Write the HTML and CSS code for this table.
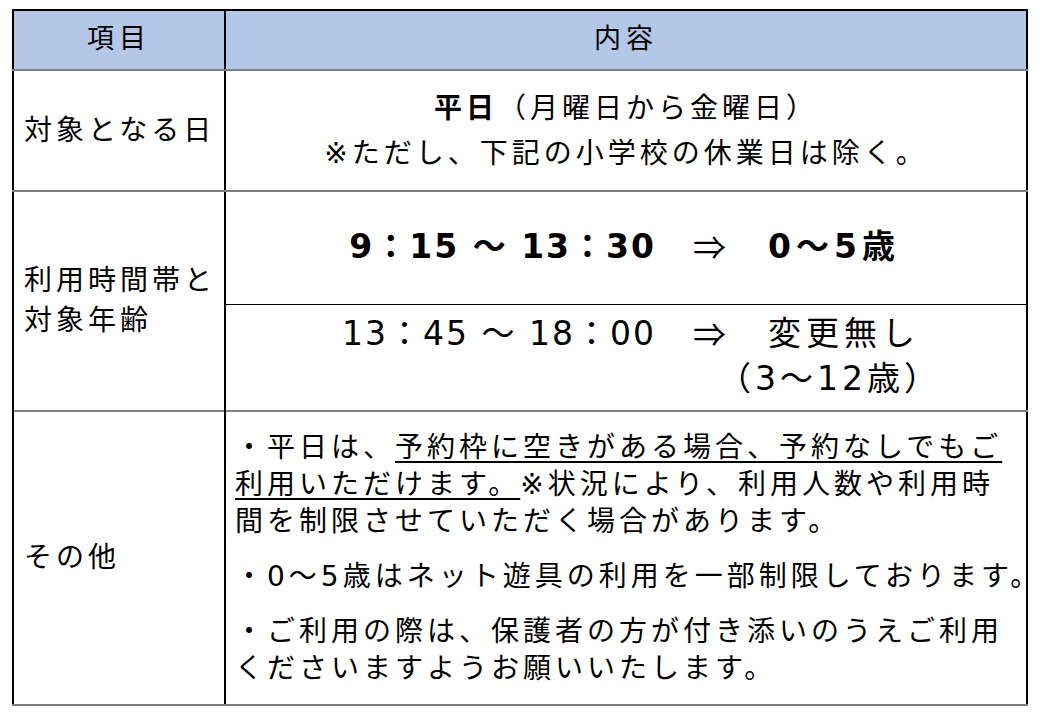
FILE: index.html
```html
<!DOCTYPE html>
<html lang="ja">
<head>
<meta charset="utf-8">
<title>利用案内</title>
<link rel="stylesheet" href="styles.css">
</head>
<body>
<table class="info">
  <colgroup><col class="c1"><col class="c2"></colgroup>
  <thead>
    <tr class="head"><th>項目</th><th>内容</th></tr>
  </thead>
  <tbody>
    <tr class="r-day">
      <td class="label">対象となる日</td>
      <td class="center">
        <div><b class="big">平日</b>（月曜日から金曜日）</div>
        <div>※ただし、下記の小学校の休業日は除く。</div>
      </td>
    </tr>
    <tr class="r-time1">
      <td class="label" rowspan="2">利用時間帯と<br>対象年齢</td>
      <td class="time-cell bold">
        <div class="time-grid"><span class="t">9：15 〜 13：30</span><span class="arrow">⇒</span><span class="age">0〜5歳</span></div>
      </td>
    </tr>
    <tr class="r-time2">
      <td class="time-cell">
        <div class="time-grid"><span class="t">13：45 〜 18：00</span><span class="arrow">⇒</span><span class="age">変更無し<span class="sub">（3〜12歳）</span></span></div>
      </td>
    </tr>
    <tr class="r-other">
      <td class="label">その他</td>
      <td class="notes">
        <p>・平日は、<u>予約枠に空きがある場合、予約なしでもご<br>利用いただけます。</u>※状況により、利用人数や利用時<br>間を制限させていただく場合があります。</p>
        <p class="nowrap">・0〜5歳はネット遊具の利用を一部制限しております。</p>
        <p>・ご利用の際は、保護者の方が付き添いのうえご利用<br>くださいますようお願いいたします。</p>
      </td>
    </tr>
  </tbody>
</table>
</body>
</html>
```

FILE: styles.css
```css
body {
  margin: 0;
  background: #ffffff;
  color: #000000;
  font-family: "DejaVu Sans", "Noto Sans CJK JP", sans-serif;
}

.info {
  margin: 9px 0 0 12px;
  width: 1016px;
  border-collapse: collapse;
  table-layout: fixed;
  font-size: 28px;
  letter-spacing: 4px;
}

.c1 { width: 212px; }

.info th,
.info td {
  border-left: 2px solid #000000;
  border-right: 2px solid #000000;
  border-top: 2px solid #7f7f7f;
  border-bottom: 2px solid #7f7f7f;
  padding: 0;
}

.head th {
  height: 55px;
  background: #b4c7e7;
  font-weight: normal;
  text-align: center;
  vertical-align: middle;
  border-top-color: #000000;
  font-size: 27px;
  letter-spacing: 5px;
  line-height: 30px;
  padding-bottom: 3px;
}

.label {
  text-align: left;
  vertical-align: middle;
  padding-left: 10px !important;
  line-height: 40px;
}

.r-day td { height: 119px; }
.r-time1 td { height: 112px; border-bottom: 1px solid #000000; }
.r-time2 td { height: 105px; border-top: 1px solid #000000; }
.r-other td { height: 292px; }

.center {
  text-align: center;
  vertical-align: middle;
  line-height: 45px;
}

.big {
  font-weight: bold;
}

.time-cell {
  vertical-align: middle;
  font-size: 33px;
  letter-spacing: 2px;
}

.time-cell.bold { font-weight: bold; }

.time-grid {
  display: grid;
  grid-template-columns: 430px 70px 1fr;
  line-height: 45px;
  margin-bottom: 4px;
}

.t { text-align: right; }

.arrow {
  text-align: right;
  font-weight: normal;
  font-family: "Noto Sans CJK JP", sans-serif;
  letter-spacing: 0;
}

.age {
  text-align: left;
  padding-left: 42px;
  letter-spacing: 5px;
}

.sub {
  display: block;
  margin-left: -50px;
  letter-spacing: 4px;
}

.notes {
  vertical-align: middle;
  padding-left: 9px !important;
  line-height: 37px;
}

.notes p {
  margin: 0;
  padding: 9px 0;
}

.nowrap { white-space: nowrap; }

u {
  text-decoration-thickness: 2px;
  text-underline-offset: 4px;
}
```
